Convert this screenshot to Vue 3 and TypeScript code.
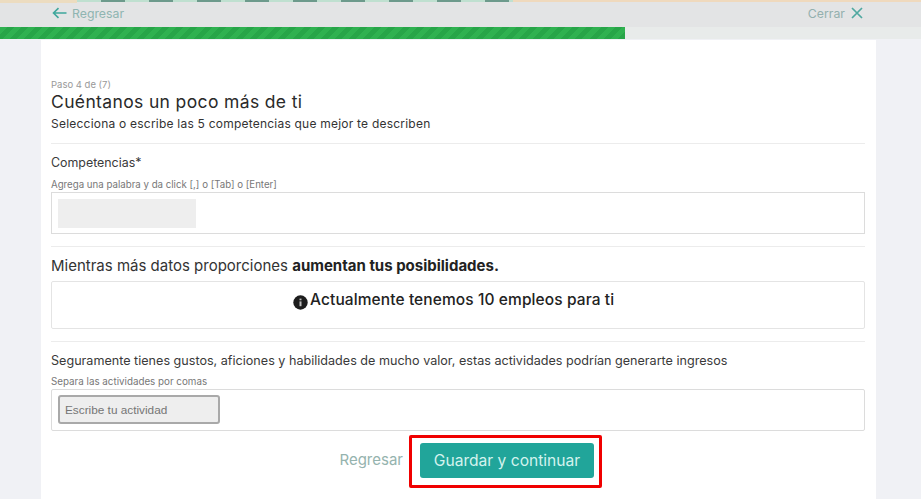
<template>
  <div class="page">
    <div class="top-strip">
      <div class="strip-tan"></div>
      <div class="strip-green"></div>
      <div class="strip-orange"></div>
    </div>
    <header class="topbar">
      <a class="nav-link back">
        <svg width="15" height="12" viewBox="0 0 15 12" fill="none" stroke="#3fa79c" stroke-width="1.6">
          <path d="M14.5 6H1.5M6.5 1.2 1.5 6l5 4.8" />
        </svg>
        <span>Regresar</span>
      </a>
      <a class="nav-link close">
        <span>Cerrar</span>
        <svg width="12" height="12" viewBox="0 0 12 12" fill="none" stroke="#4fa8a0" stroke-width="1.7">
          <path d="M1 1l10 10M11 1 1 11" />
        </svg>
      </a>
    </header>
    <div class="progress">
      <div class="progress-fill" :style="{ width: progress + 'px' }"></div>
    </div>

    <main class="card">
      <section class="intro">
        <p class="step">Paso {{ step }} de ({{ totalSteps }})</p>
        <h1>Cuéntanos un poco más de ti</h1>
        <p class="subtitle">Selecciona o escribe las 5 competencias que mejor te describen</p>
      </section>

      <section class="block skills">
        <label class="label">Competencias*</label>
        <p class="hint">Agrega una palabra y da click [,] o [Tab] o [Enter]</p>
        <div class="field">
          <div class="chip-placeholder"></div>
        </div>
      </section>

      <section class="block info">
        <p class="lead">Mientras más datos proporciones <strong>aumentan tus posibilidades.</strong></p>
        <div class="jobs">
          <svg class="info-icon" width="15" height="15" viewBox="0 0 15 15">
            <circle cx="7.5" cy="7.5" r="7.2" fill="#1d1d1d" />
            <rect x="6.5" y="6.4" width="2" height="4.8" fill="#bdbdbd" />
            <rect x="6.5" y="3.6" width="2" height="1.7" fill="#bdbdbd" />
          </svg>
          <span>Actualmente tenemos {{ jobs }} empleos para ti</span>
        </div>
      </section>

      <section class="block hobbies">
        <p class="hobbies-text">Seguramente tienes gustos, aficiones y habilidades de mucho valor, estas actividades podrían generarte ingresos</p>
        <p class="hint">Separa las actividades por comas</p>
        <div class="field field-small">
          <input class="activity" type="text" placeholder="Escribe tu actividad" />
        </div>
      </section>

      <footer class="actions">
        <a class="back-link">Regresar</a>
        <div class="highlight">
          <button class="save" type="button">Guardar y continuar</button>
        </div>
      </footer>
    </main>
  </div>
</template>

<script setup lang="ts">
import { ref } from 'vue'

const step = ref(4)
const totalSteps = ref(7)
const jobs = ref(10)
const progress = ref(625)
</script>

<style>
html,
body {
  margin: 0;
  overflow: hidden;
}
</style>

<style scoped>
.page {
  height: 499px;
  overflow: hidden;
  background: #f0f1f5;
  font-family: Inter, "Open Sans", sans-serif;
  color: #222;
}

.top-strip {
  height: 3px;
  display: flex;
  align-items: flex-start;
  background: #e3e4e5;
}

.strip-tan {
  width: 77px;
  height: 3px;
  background: #ecdcc0;
}

.strip-green {
  width: 436px;
  height: 2px;
  background: repeating-linear-gradient(90deg, #bfe0d0 0 24px, #6d9a8c 24px 48px);
}

.strip-orange {
  flex: 1;
  height: 2px;
  background: #efd9bd;
}

.topbar {
  height: 24px;
  padding: 0 58px 4px 52px;
  box-sizing: border-box;
  display: flex;
  align-items: center;
  justify-content: space-between;
  background: #e3e4e5;
}

.nav-link {
  display: flex;
  align-items: center;
  font-size: 12.3px;
  color: #8fb5b1;
}

.back {
  gap: 5px;
}

.close {
  gap: 6px;
  color: #93b0ae;
}

.progress {
  height: 12px;
  background: #e8ebea;
}

.progress-fill {
  height: 100%;
  background: repeating-linear-gradient(135deg, #2fb150 0 5px, #27a548 5px 10px);
}

.card {
  width: 835px;
  height: 459px;
  margin: 1px 0 0 41px;
  padding: 0 11px 0 10px;
  box-sizing: border-box;
  background: #fff;
}

.intro {
  padding-top: 39px;
  height: 104px;
  box-sizing: border-box;
  border-bottom: 1px solid #ececec;
}

.step {
  margin: 0;
  font-size: 9.5px;
  line-height: 12px;
  color: #999;
}

h1 {
  margin: 0;
  font-size: 17.5px;
  line-height: 22px;
  font-weight: 400;
  letter-spacing: 0.36px;
  color: #2a2a2a;
}

.subtitle {
  margin: 3px 0 0;
  font-size: 12px;
  line-height: 16px;
  font-weight: 400;
  letter-spacing: 0.22px;
  color: #333;
}

.block {
  border-bottom: 1px solid #ececec;
}

.skills {
  height: 103px;
  padding-top: 11px;
  box-sizing: border-box;
}

.label {
  display: block;
  font-size: 12.4px;
  line-height: 16px;
  font-weight: 400;
  color: #3a3a3a;
}

.hint {
  margin: 8px 0 0;
  font-size: 9.7px;
  line-height: 12px;
  color: #777;
}

.field {
  height: 42px;
  margin-top: 1px;
  padding: 6px;
  box-sizing: border-box;
  border: 1px solid #dcdcdc;
}

.chip-placeholder {
  width: 138px;
  height: 29px;
  background: #eeeeee;
}

.info {
  height: 95px;
  padding-top: 9px;
  box-sizing: border-box;
}

.lead {
  margin: 0;
  font-size: 15px;
  line-height: 20px;
  color: #333;
}

.lead strong {
  font-weight: 700;
  color: #222;
}

.jobs {
  height: 48px;
  margin-top: 5px;
  padding: 8px 0 0 241px;
  box-sizing: border-box;
  display: flex;
  align-items: flex-start;
  gap: 2px;
  border: 1px solid #e4e4e4;
  border-radius: 2px;
  font-size: 15.5px;
  line-height: 20px;
  font-weight: 500;
  letter-spacing: 0.1px;
  color: #222;
}

.info-icon {
  margin-top: 5px;
}

.hobbies {
  height: 90px;
  padding-top: 11px;
  box-sizing: border-box;
  border-bottom: none;
}

.hobbies-text {
  margin: 0;
  font-size: 12.6px;
  line-height: 16px;
  color: #3a3a3a;
}

.hobbies .hint {
  margin-top: 7px;
  font-size: 9.8px;
}

.field-small {
  height: 42px;
  padding: 5px 6px;
  border-radius: 2px;
}

.activity {
  display: block;
  width: 162px;
  height: 29px;
  padding: 0 5px;
  box-sizing: border-box;
  border: 2px solid #a9a9a9;
  border-radius: 3px;
  background: #eeeeee;
  font-family: "Liberation Sans", Arial, sans-serif;
  font-size: 11.8px;
  font-weight: 400;
  outline: none;
}

.activity::placeholder {
  color: #757575;
  opacity: 1;
}

.actions {
  display: flex;
  align-items: center;
  justify-content: flex-end;
  padding-right: 263px;
  margin-top: 3px;
}

.back-link {
  margin-right: 6px;
  margin-bottom: 5px;
  font-size: 15px;
  color: #95b3ae;
}

.highlight {
  padding: 5px 5px 7px 8px;
  border: 3px solid #f00000;
  border-radius: 2px;
}

.save {
  display: block;
  width: 174px;
  height: 35px;
  padding: 0;
  border: none;
  border-radius: 3px;
  background: #21a59a;
  color: #d4f3ee;
  font-family: Inter, "Open Sans", sans-serif;
  font-size: 15.6px;
  font-weight: 400;
}
</style>
